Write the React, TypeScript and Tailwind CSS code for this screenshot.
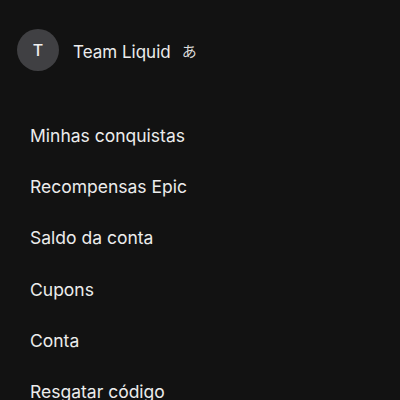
const items = [
  "Minhas conquistas",
  "Recompensas Epic",
  "Saldo da conta",
  "Cupons",
  "Conta",
  "Resgatar código",
];

export default function App() {
  return (
    <div
      className="h-[400px] w-[400px] overflow-hidden bg-[#121212] text-[#ececec]"
      style={{ fontFamily: "Inter, 'Noto Sans CJK JP', sans-serif" }}
    >
      {/* Profile */}
      <div className="flex items-center pl-[17px] pt-[29px]">
        <div className="flex h-[42px] w-[42px] items-center justify-center rounded-full bg-[#404043] text-[16px] font-medium text-[#f0f0f0]">
          T
        </div>
        <div className="flex items-center pt-[5px]">
          <span className="ml-[14px] text-[17px]">Team Liquid</span>
          <span className="ml-[11px] text-[15px] text-[#dcdcdc]">あ</span>
        </div>
      </div>

      {/* Menu */}
      <nav className="mt-[53px] flex flex-col pl-[30px]">
        {items.map((item) => (
          <a key={item} className="h-[51.2px] text-[17.5px] leading-[24px]">
            {item}
          </a>
        ))}
      </nav>
    </div>
  );
}
